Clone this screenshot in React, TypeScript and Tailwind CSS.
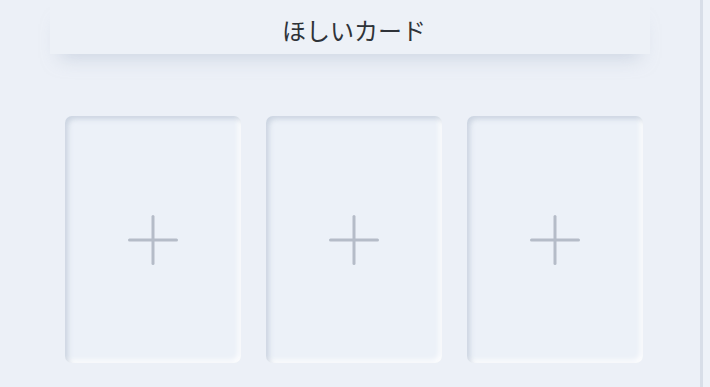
const slots = [0, 1, 2]

function PlusMark() {
  return (
    <svg width="50" height="50" viewBox="0 0 50 50" fill="none" stroke="#b5bcc8" strokeWidth="3" strokeLinecap="round">
      <path d="M25 1.5v47" />
      <path d="M1.5 25h47" />
    </svg>
  )
}

function EmptySlot() {
  return (
    <div className="w-[176px] h-[247px] rounded-[7px] bg-[#ecf1f8] flex items-center justify-center shadow-[inset_3px_3px_5px_rgba(163,177,198,0.45),inset_-3px_-3px_5px_rgba(255,255,255,0.85)]">
      <PlusMark />
    </div>
  )
}

export default function App() {
  return (
    <div
      className="w-[710px] h-[387px] overflow-hidden flex bg-[#ecf0f7]"
      style={{ fontFamily: '"Noto Sans CJK JP", "Noto Sans", sans-serif' }}
    >
      <div className="w-[700px] h-full flex flex-col items-center">
        {/* Title */}
        <div className="w-[600px] h-[54px] flex items-center justify-center bg-[#edf1f7] shadow-[0_14px_18px_-10px_rgba(175,188,208,0.5)]">
          <h1 className="text-[24px] leading-none text-[#2f3339] font-normal pt-[6px] pl-[8px]">ほしいカード</h1>
        </div>

        {/* Slots */}
        <div className="flex gap-[25px] mt-[62px] pl-[8px]">
          {slots.map((i) => (
            <EmptySlot key={i} />
          ))}
        </div>
      </div>
      <div className="w-[3px] h-full bg-[#d8dee8]" />
      <div className="flex-1 h-full bg-[#eef2f8]" />
    </div>
  )
}
